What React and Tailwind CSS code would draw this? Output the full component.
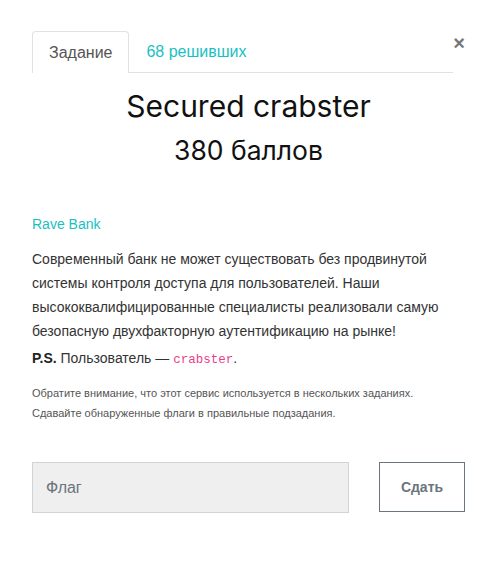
import React from 'react'

const sans = { fontFamily: '"Liberation Sans", Arial, sans-serif' }

export default function App() {
  return (
    <div className="w-[496px] h-[563px] bg-white" style={sans}>
      <div className="pl-8 pr-[31px] pt-[31px]">
        <div className="flex items-start">
          <div className="flex flex-1 h-[42px]">
            <div className="px-[16px] flex items-center border border-b-0 border-[#dee2e6] rounded-t-[4px] text-[16px] text-[#555]">
              Задание
            </div>
            <div className="flex-1 flex items-center px-[17px] border-b border-[#dee2e6] text-[16px] text-[#19bfc2]">
              68 решивших
            </div>
          </div>
          <button className="w-[12px] pt-[2px] text-[#777] text-[20px] font-bold leading-none">×</button>
        </div>

        <div className="text-center mt-[14px]" style={{ fontFamily: 'Inter, sans-serif' }}>
          <h1 className="text-[30px] leading-[38px] text-[#111]">Secured crabster</h1>
          <div className="text-[26.5px] leading-[32px] mt-[9px] text-[#111]">380 баллов</div>
        </div>

        <div className="mt-[48px] text-[14px] text-[#19bfc2] leading-[20px]">Rave Bank</div>

        <p className="mt-[13px] text-[14px] leading-[24px] text-[#333]">
          Современный банк не может существовать без продвинутой системы контроля доступа для пользователей. Наши высококвалифицированные специалисты реализовали самую безопасную двухфакторную аутентификацию на рынке!
        </p>

        <p className="mt-[3px] text-[14px] leading-[24px] text-[#333]">
          <b className="text-[#222]">P.S.</b> Пользователь —{' '}
          <code className="text-[12.5px] text-[#e83e8c]" style={{ fontFamily: '"Liberation Mono", monospace' }}>crabster</code>.
        </p>

        <div className="mt-[11px] text-[11px] leading-[20px] text-[#555]">
          <p>Обратите внимание, что этот сервис используется в нескольких заданиях.</p>
          <p>Сдавайте обнаруженные флаги в правильные подзадания.</p>
        </div>

        <div className="mt-[39px] flex gap-[30px]">
          <input
            placeholder="Флаг"
            className="w-[317px] h-[51px] bg-[#efefef] border border-[#ced4da] px-[13px] text-[16px] placeholder-[#6c757d] outline-none"
          />
          <button className="w-[86px] h-[50px] border border-[#6c757d] text-[#6c757d] text-[14px] font-bold">
            Сдать
          </button>
        </div>
      </div>
    </div>
  )
}
